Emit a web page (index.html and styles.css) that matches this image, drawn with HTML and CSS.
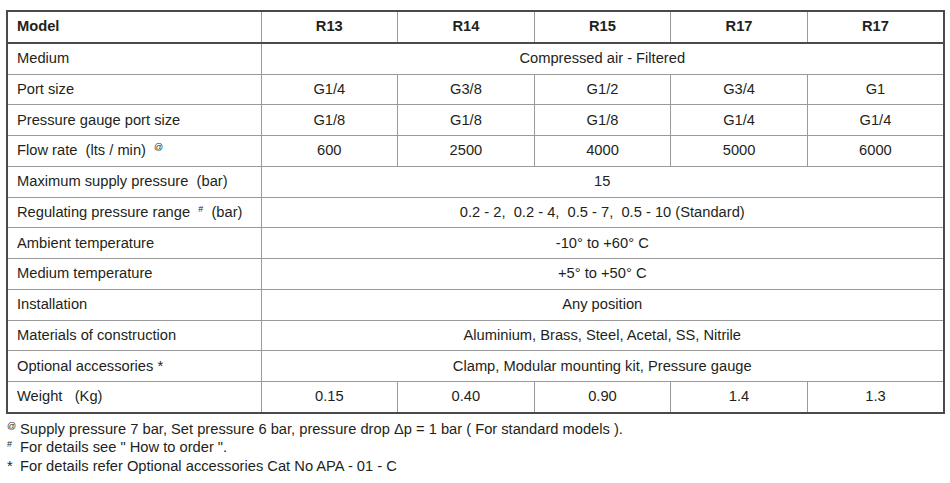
FILE: index.html
```html
<!DOCTYPE html>
<html>
<head>
<meta charset="utf-8">
<link rel="stylesheet" href="styles.css">
</head>
<body>
<table class="spec">
  <colgroup>
    <col class="c-label">
    <col class="c-val"><col class="c-val"><col class="c-val"><col class="c-val"><col class="c-val">
  </colgroup>
  <thead>
    <tr class="head">
      <th class="label">Model</th>
      <th>R13</th><th>R14</th><th>R15</th><th>R17</th><th>R17</th>
    </tr>
  </thead>
  <tbody>
    <tr><td class="label">Medium</td><td colspan="5">Compressed air - Filtered</td></tr>
    <tr><td class="label">Port size</td><td>G1/4</td><td>G3/8</td><td>G1/2</td><td>G3/4</td><td>G1</td></tr>
    <tr><td class="label">Pressure gauge port size</td><td>G1/8</td><td>G1/8</td><td>G1/8</td><td>G1/4</td><td>G1/4</td></tr>
    <tr><td class="label">Flow rate&nbsp; (lts / min)&nbsp; <sup class="mark">@</sup></td><td>600</td><td>2500</td><td>4000</td><td>5000</td><td>6000</td></tr>
    <tr><td class="label">Maximum supply pressure&nbsp; (bar)</td><td colspan="5">15</td></tr>
    <tr><td class="label">Regulating pressure range&nbsp; <sup class="mark">#</sup>&nbsp; (bar)</td><td colspan="5">0.2 - 2,&nbsp; 0.2 - 4,&nbsp; 0.5 - 7,&nbsp; 0.5 - 10 (Standard)</td></tr>
    <tr><td class="label">Ambient temperature</td><td colspan="5">-10° to +60° C</td></tr>
    <tr><td class="label">Medium temperature</td><td colspan="5">+5° to +50° C</td></tr>
    <tr><td class="label">Installation</td><td colspan="5">Any position</td></tr>
    <tr><td class="label">Materials of construction</td><td colspan="5">Aluminium, Brass, Steel, Acetal, SS, Nitrile</td></tr>
    <tr><td class="label">Optional accessories *</td><td colspan="5">Clamp, Modular mounting kit, Pressure gauge</td></tr>
    <tr><td class="label">Weight&nbsp;&nbsp; (Kg)</td><td>0.15</td><td>0.40</td><td>0.90</td><td>1.4</td><td>1.3</td></tr>
  </tbody>
</table>
<div class="notes">
  <div class="note"><span class="sym"><sup class="mark">@</sup></span><span>Supply pressure 7 bar, Set pressure 6 bar, pressure drop Δp = 1 bar ( For standard models ).</span></div>
  <div class="note"><span class="sym"><sup class="mark">#</sup></span><span>For details see " How to order ".</span></div>
  <div class="note"><span class="sym">*</span><span>For details refer Optional accessories Cat No APA - 01 - C</span></div>
</div>
</body>
</html>
```

FILE: styles.css
```css
html, body {
  margin: 0;
  padding: 0;
  background: #ffffff;
}
body {
  padding: 10px 0 0 6px;
  font-family: "Liberation Sans", Arial, sans-serif;
  font-size: 14.7px;
  color: #231f20;
}
.spec {
  border-collapse: collapse;
  width: 939px;
  table-layout: fixed;
  border: 2px solid #4a4a4a;
}
.c-label { width: 254px; }
.spec th,
.spec td {
  height: 29.75px;
  padding: 0;
  text-align: center;
  vertical-align: middle;
  border: 1px solid #9a9a9a;
  line-height: 17px;
  white-space: nowrap;
}
.spec th {
  font-weight: bold;
  border-bottom: 2px solid #4a4a4a;
}
.spec .label {
  text-align: left;
  padding-left: 9px;
}
.mark {
  font-size: 9px;
  vertical-align: 5px;
  line-height: 0;
}
.notes {
  padding-top: 6px;
  line-height: 18.5px;
}
.note {
  display: flex;
}
.sym {
  width: 14px;
  flex: none;
  text-align: left;
  padding-left: 1px;
  box-sizing: border-box;
}
```
